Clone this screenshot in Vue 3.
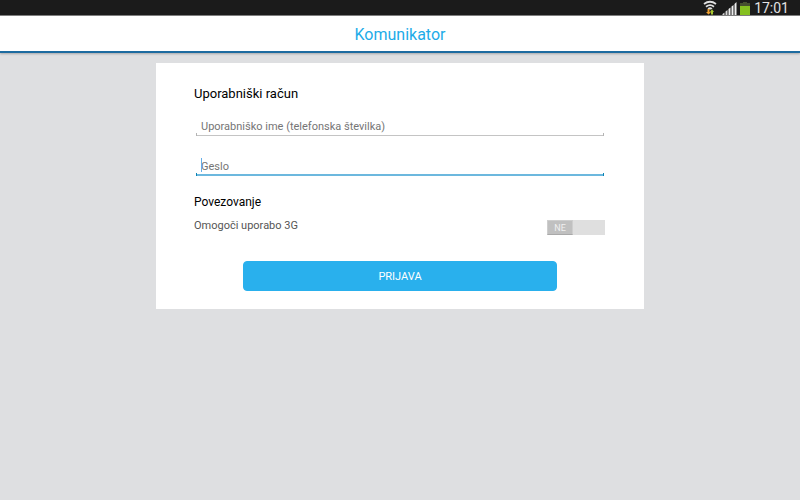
<script setup>
import { ref } from 'vue'

const username = ref('')
const password = ref('')
const use3g = ref(false)
</script>

<template>
  <div class="screen">
    <div class="status">
      <svg class="wifi" width="14" height="15" viewBox="0 0 14 15" aria-hidden="true">
        <g fill="none" stroke="#e0e0e0" stroke-width="1.8">
          <path d="M1 4Q7 -0.5 13 4" />
          <path d="M3 6.700Q7 3.500 11 6.700" />
        </g>
        <path d="M4.500 8.500Q7 6 9.500 8.500L8 9.500H6z" fill="#e0e0e0" />
        <path d="M4.500 9h2v3H8L5.500 14.500 3 12h1.500z" fill="#f0a030" />
        <path d="M8 14.500h2V12h1L9 9.200 7 12h1z" fill="#a8c830" />
      </svg>
      <svg class="signal" width="15" height="14" viewBox="0 0 15 14" aria-hidden="true">
        <path d="M0.500 13L2.500 11.500V14H0.500zM3.500 10.500L5.500 9V14H3.500z" fill="#d8d8d8" />
        <path d="M6.500 8L8.500 6.500V14H6.500zM9.500 5.500L11.500 4V14H9.500zM12.500 3L14.500 1V14H12.500z" fill="#eeeeee" />
      </svg>
      <svg class="battery" width="10" height="14" viewBox="0 0 10 14" aria-hidden="true">
        <path d="M3 1h4v1h3v3H0V2h3z" fill="#46502f" />
        <path d="M0 5h10v9H0z" fill="#85c020" />
      </svg>
      <time>17:01</time>
    </div>

    <header class="bar">
      <h1>Komunikator</h1>
    </header>

    <form class="card" @submit.prevent>
      <h2 class="title">Uporabniški račun</h2>
      <div class="field">
        <input v-model="username" type="text" aria-label="Uporabniško ime" placeholder="Uporabniško ime (telefonska številka)" />
      </div>
      <div class="field active">
        <input v-model="password" type="password" aria-label="Geslo" placeholder="Geslo" />
        <span v-if="!password" class="caret"></span>
      </div>

      <h2 class="subtitle">Povezovanje</h2>
      <div class="row">
        <label for="use3g">Omogoči uporabo 3G</label>
        <div class="switch" :class="{ on: use3g }">
          <input id="use3g" v-model="use3g" type="checkbox" role="switch" />
          <span class="thumb">{{ use3g ? 'DA' : 'NE' }}</span>
        </div>
      </div>

      <button type="submit">PRIJAVA</button>
    </form>
  </div>
</template>

<style>
body {
  background: #dedfe1;
}
</style>

<style scoped>
.screen {
  min-height: 100vh;
  background: #dedfe1;
  font-family: Roboto, "Noto Sans", sans-serif;
  color: #000;
}

.status {
  display: flex;
  align-items: center;
  justify-content: flex-end;
  box-sizing: border-box;
  height: 16px;
  padding-right: 11px;
  background: #1b1b1b;
  border-bottom: 1px solid #808080;
}

.wifi {
  margin-right: 5px;
}

.signal {
  margin-right: 3px;
}

.battery {
  margin-right: 4px;
}

time {
  padding-top: 2px;
  color: #e2e2e2;
  font-size: 14px;
  line-height: 15px;
}

.bar {
  background: #fff;
  border-bottom: 2px solid #1c6ba0;
  box-shadow: 0 1px 2px rgba(0, 0, 0, 0.25);
}

h1 {
  margin: 0;
  padding: 8px 0 5px;
  color: #1dabe8;
  font-size: 16px;
  font-weight: 400;
  line-height: 22px;
  text-align: center;
}

.card {
  box-sizing: border-box;
  width: 61%;
  margin: 10px auto 0;
  padding: 20px 38px 18px;
  background: #fff;
}

h2 {
  margin: 0;
  font-weight: 400;
}

.title {
  font-size: 13px;
  line-height: 22px;
}

.field {
  position: relative;
  margin: 11px 2px 0;
  --line: #c4c4c4;
  --tick: #b4b4b4;
  --weight: 1px;
}

.field.active {
  margin-top: 20px;
  --line: #6cb8de;
  --tick: #0b84b4;
  --weight: 2px;
}

.field input {
  display: block;
  box-sizing: border-box;
  width: 100%;
  height: 20px;
  padding: 0 5px;
  border: 0;
  outline: 0;
  background:
    linear-gradient(var(--tick), var(--tick)) left bottom / 1px 3px no-repeat,
    linear-gradient(var(--tick), var(--tick)) right bottom / 1px 3px no-repeat,
    linear-gradient(var(--line), var(--line)) left bottom / 100% var(--weight) no-repeat;
  color: #333;
  font-family: inherit;
  font-size: 11px;
}

.field input::placeholder {
  color: #757575;
  opacity: 1;
}

.caret {
  position: absolute;
  left: 5px;
  top: 2px;
  width: 1px;
  height: 14px;
  background: #66aee8;
}

.subtitle {
  margin-top: 16px;
  font-size: 12px;
  line-height: 20px;
}

.row {
  display: flex;
  align-items: flex-start;
  justify-content: space-between;
  margin-top: 4px;
  padding-right: 1px;
}

.row label {
  color: #555;
  font-size: 11px;
  line-height: 20px;
}

.switch {
  display: flex;
  position: relative;
  width: 58px;
  height: 15px;
  margin-top: 4px;
  background: #dfdfdf;
}

.switch.on {
  justify-content: flex-end;
}

.switch input {
  position: absolute;
  inset: 0;
  width: 100%;
  height: 100%;
  margin: 0;
  opacity: 0;
}

.thumb {
  box-sizing: border-box;
  width: 26px;
  border: 1px solid #cecece;
  border-bottom-color: #a9a9a9;
  background: #c0c0c0;
  color: #f0f0f0;
  font-size: 9px;
  line-height: 14px;
  text-align: center;
  pointer-events: none;
}

button {
  display: block;
  width: 76%;
  height: 30px;
  margin: 25px auto 0;
  padding: 0;
  border: 1px solid #29b0ed;
  border-radius: 4px;
  background: #29b0ed;
  color: #fff;
  font-family: inherit;
  font-size: 11px;
}
</style>
